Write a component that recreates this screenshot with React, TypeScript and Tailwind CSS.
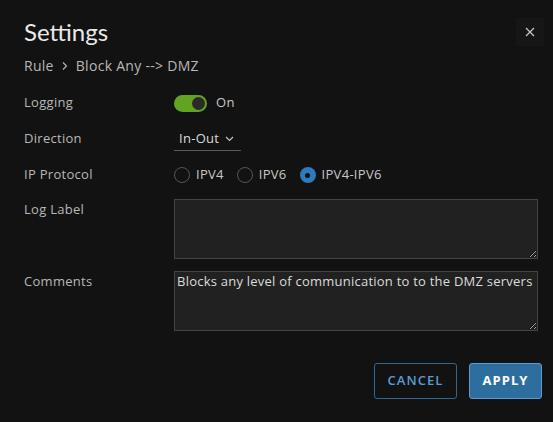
import { useState } from 'react'

const font = { fontFamily: '"Open Sans", Lato, sans-serif', letterSpacing: '0.018em' }

function Radio({ label, checked }: { label: string; checked?: boolean }) {
  return (
    <label className="flex items-center gap-[6px]">
      {checked ? (
        <span className="flex h-4 w-4 items-center justify-center rounded-full bg-[#2e7abf]">
          <span className="h-[5px] w-[5px] rounded-full bg-[#121212]" />
        </span>
      ) : (
        <span className="h-4 w-4 rounded-full border border-[#565656]" />
      )}
      <span className="text-[13px] text-[#c8c8c8]">{label}</span>
    </label>
  )
}

export default function App() {
  const [on] = useState(true)

  return (
    <div className="h-[422px] w-[553px] bg-[#121212] text-[#c8c8c8]" style={font}>
      <div className="flex items-start justify-between pl-6 pr-[9px] pt-[17px]">
        <h1
          className="text-[24px] leading-[30px] text-[#eaeaea]"
          style={{ fontFamily: 'Lato, sans-serif', letterSpacing: 0 }}
        >
          Settings
        </h1>
        <button className="mt-[1px] flex h-7 w-7 items-center justify-center bg-[#161616]">
          <svg width="10" height="10" viewBox="0 0 10 10" stroke="#c8c8c8" strokeWidth="1.2">
            <path d="M1 1l8 8M9 1l-8 8" />
          </svg>
        </button>
      </div>

      <div className="mt-[8px] flex items-center gap-[7px] pl-6 text-[14px] text-[#b8b8b8]">
        <span>Rule</span>
        <svg width="8" height="10" viewBox="0 0 8 10" fill="none" stroke="#b8b8b8" strokeWidth="1.1">
          <path d="M2 1.5l3.5 3.5L2 8.5" />
        </svg>
        <span>Block Any --&gt; DMZ</span>
      </div>

      <div className="mt-[17px] flex flex-col pl-6 pr-[15px] text-[13px]">
        <div className="flex h-5 items-center">
          <span className="w-[150px] text-[#b8b8b8]">Logging</span>
          <div className="flex items-center gap-[9px]">
            <span className="flex h-[17px] w-[33px] items-center justify-end rounded-full bg-[#62a420] px-[2px]">
              <span className="h-[13px] w-[13px] rounded-full bg-[#2a2a2a]" />
            </span>
            <span className="text-[#c8c8c8]">{on ? 'On' : 'Off'}</span>
          </div>
        </div>

        <div className="mt-4 flex h-5 items-center">
          <span className="w-[150px] text-[#b8b8b8]">Direction</span>
          <span className="flex h-[23px] w-[67px] items-center gap-[6px] border-b border-[#5a5a5a] pl-[5px] pt-[1px] text-[#dcdcdc]">
            In-Out
            <svg width="9" height="6" viewBox="0 0 9 6" fill="none" stroke="#c8c8c8" strokeWidth="1.1">
              <path d="M1 1l3.5 3.5L8 1" />
            </svg>
          </span>
        </div>

        <div className="mt-4 flex h-5 items-center">
          <span className="w-[150px] text-[#b8b8b8]">IP Protocol</span>
          <div className="flex items-center gap-[13px]">
            <Radio label="IPV4" />
            <Radio label="IPV6" />
            <Radio label="IPV4-IPV6" checked />
          </div>
        </div>

        <div className="mt-[14px] flex">
          <span className="w-[150px] pt-[1px] text-[#b8b8b8]">Log Label</span>
          <textarea
            className="h-[60px] flex-1 resize-y border border-[#444] bg-[#212121] px-[3px] py-[1px] text-[13px] text-[#dcdcdc] outline-none"
            style={font}
          />
        </div>

        <div className="mt-3 flex">
          <span className="w-[150px] pt-[1px] text-[#b8b8b8]">Comments</span>
          <textarea
            className="h-[60px] flex-1 resize-y border border-[#444] bg-[#212121] px-[2px] py-0 text-[13px] text-[#dcdcdc] outline-none"
            style={font}
            defaultValue="Blocks any level of communication to to the DMZ servers"
          />
        </div>
      </div>

      <div className="mt-[32px] flex justify-end gap-3 pr-[11px]">
        <button className="h-9 w-[83px] rounded-[3px] border border-[#2f6796] text-[13px] font-semibold tracking-[0.08em] text-[#5c9bd0]">
          CANCEL
        </button>
        <button className="h-9 w-[73px] rounded-[3px] border border-[#5b9bd1] bg-[#2e6e9e] text-[13px] font-bold tracking-[0.08em] text-white">
          APPLY
        </button>
      </div>
    </div>
  )
}
